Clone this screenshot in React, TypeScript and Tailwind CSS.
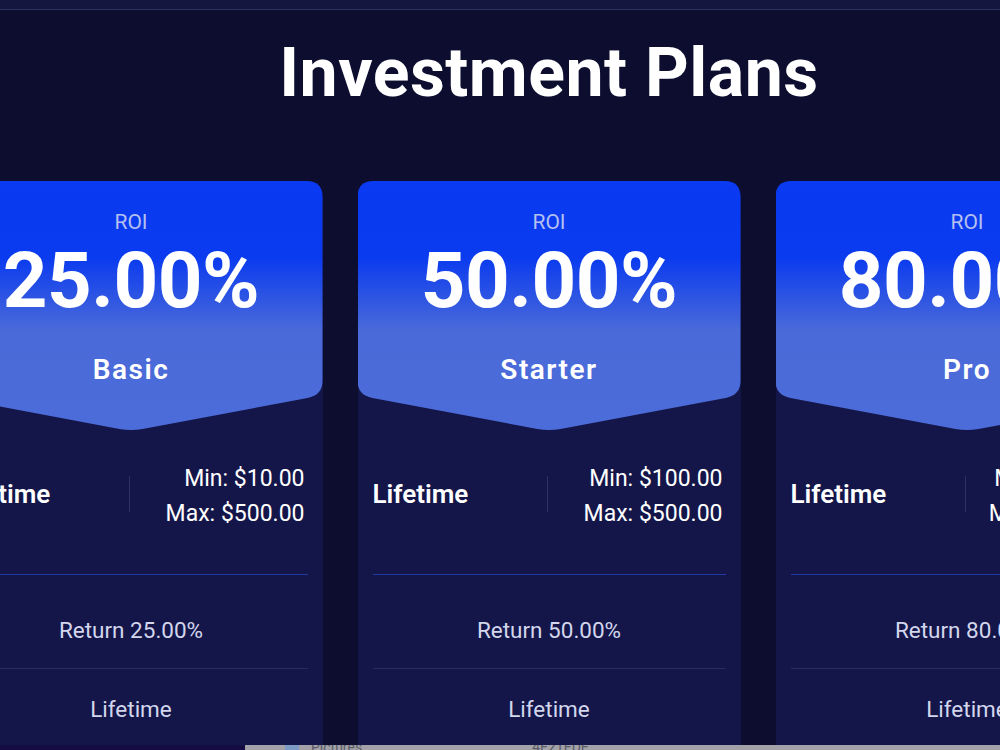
type Plan = {
  name: string;
  roi: string;
  min: string;
  max: string;
  term: string;
};

const PLANS: Plan[] = [
  { name: 'Basic', roi: '25.00%', min: '$10.00', max: '$500.00', term: 'Lifetime' },
  { name: 'Starter', roi: '50.00%', min: '$100.00', max: '$500.00', term: 'Lifetime' },
  { name: 'Pro', roi: '80.00%', min: '$1000.00', max: '$5000.00', term: 'Lifetime' },
];

function PlanCard({ plan }: { plan: Plan }) {
  return (
    <div className="w-[383px] h-[600px] shrink-0 rounded-t-[16px] bg-[#14164a]">
      {/* ribbon header with the pointed bottom edge */}
      <div className="h-[249px] flex flex-col items-center bg-[linear-gradient(180deg,#0a3af1_0%,#0b3bef_31%,#4a6ad9_60%,#4b6cd9_100%)] [clip-path:path('M0,16_Q0,0_16,0_H367_Q383,0_383,16_V200_Q383,214_368,217_L203,248_Q191.5,250_180,248_L15,217_Q0,214_0,200_Z')]">
        <div className="mt-[28px] text-[21px] leading-[26px] text-[#b4c0f0]">ROI</div>
        <div className="mt-[4px] text-[78px] leading-[84px] font-bold tracking-[-0.5px] text-white">{plan.roi}</div>
        <div className="mt-[30px] text-[28px] leading-[34px] font-semibold tracking-[1.5px] text-white">{plan.name}</div>
      </div>

      <div className="px-[15px]">
        <div className="mt-[34px] h-[60px] flex items-center">
          <div className="flex-1 text-[26px] font-semibold text-white">{plan.term}</div>
          <div className="w-px h-[36px] bg-[#2d3066]" />
          <div className="flex-1 text-right text-[23px] leading-[35px] text-white pr-[3px] pt-[4px]">
            <div>Min: {plan.min}</div>
            <div>Max: {plan.max}</div>
          </div>
        </div>
        <div className="mt-[50px] h-px bg-[#1f3a9c]" />
        <div className="h-[93px] flex items-center justify-center pt-[18px] text-[22.5px] text-[#d3d6ec]">
          Return {plan.roi}
        </div>
        <div className="h-px bg-[#272b60]" />
        <div className="h-[82px] flex items-center justify-center text-[22.5px] text-[#d3d6ec]">
          {plan.term}
        </div>
      </div>
    </div>
  );
}

export default function App() {
  return (
    <div className="h-[750px] w-[1000px] overflow-hidden flex flex-col bg-[#0c0d2f] font-['Roboto','Inter',sans-serif]">
      <div className="h-[10px] shrink-0 bg-[#14163f] border-b border-[#2e3162]" />

      <div className="flex-1 min-h-0 overflow-hidden">
        <div className="w-[1098px] flex flex-col items-center">
          <h1 className="mt-[25px] text-[68px] leading-[76px] font-bold text-white tracking-[0.5px]">
            Investment Plans
          </h1>
          <div className="w-full mt-[70px] flex justify-center gap-[35px]">
            {PLANS.map(p => (
              <PlanCard key={p.name} plan={p} />
            ))}
          </div>
        </div>
      </div>

      {/* taskbar sliver along the bottom edge */}
      <div className="h-[5px] shrink-0 flex overflow-hidden">
        <div className="w-[245px] bg-[#150c44]" />
        <div className="flex-1 bg-[#a2a2a8] flex text-[14px] leading-[10px] text-[#5a5a66] -mt-[3px]">
          <div className="ml-[40px] w-[14px] h-[10px] bg-[#7d9ac4]" />
          <span className="ml-[12px]">Pictures</span>
          <span className="ml-[170px]">4E21EDE</span>
        </div>
      </div>
    </div>
  );
}
